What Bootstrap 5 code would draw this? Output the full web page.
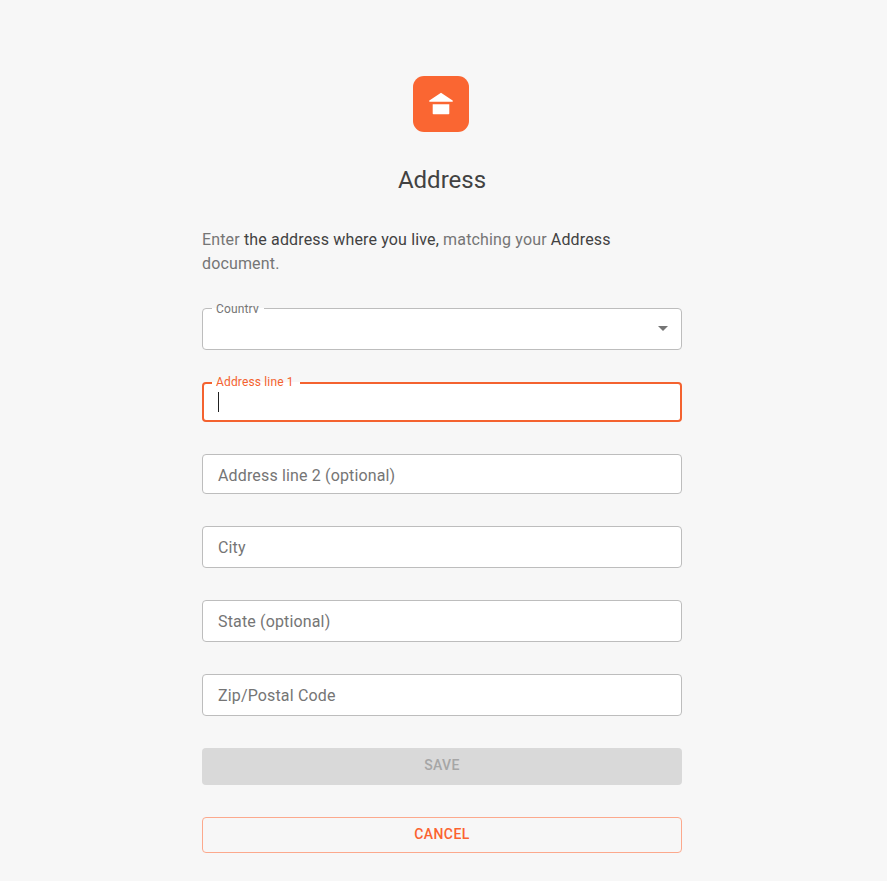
<!doctype html>
<html lang="en">
<head>
<meta charset="utf-8">
<title>Address</title>
<link href="https://cdn.jsdelivr.net/npm/bootstrap@5.3.0/dist/css/bootstrap.min.css" rel="stylesheet">
<style>
html,body{height:881px;overflow:hidden}
body{background:#f7f7f7;font-family:Roboto,"Liberation Sans",sans-serif;color:#424242}
.page-wrap{width:480px;margin-left:202px;padding-top:76px}
.logo-box{width:56px;height:56px;background:#fa6632;border-radius:11px;margin-left:211px}
.logo-box svg{display:block}
.page-title{font-size:24px;font-weight:400;line-height:32px;margin:32px 0 0;color:#424242;text-align:center}
.intro{font-size:16px;line-height:24px;letter-spacing:.15px;margin:32px 0 0;color:#757575}
.intro b{font-weight:400;color:#424242}
.form-stack{margin-top:32px;gap:32px}
.field-box{position:relative;background:#fff;border:1px solid #bdbdbd;border-radius:4px;height:42px;display:flex;align-items:center;padding:2px 15px 0;font-size:16px;letter-spacing:.15px;color:#757575}
.field-slim{height:40px;padding-top:4px}
.field-focus{border:2px solid #f4622f;padding:0 14px}
.float-label{position:absolute;top:-7px;left:9px;padding:0 5px 0 4px;height:11px;line-height:14px;overflow:hidden;font-size:12px;letter-spacing:.15px;color:#757575;background:linear-gradient(#f7f7f7 0 6px,#fff 6px)}
.field-focus .float-label{top:-8px;left:8px;height:14px;line-height:13px;padding:0 6px 0 4px;color:#f4622f}
.caret-bar{width:1px;height:20px;background:#212121}
.drop-arrow{position:absolute;right:13px;top:17px;width:0;height:0;border-left:5px solid transparent;border-right:5px solid transparent;border-top:5px solid #757575}
.act-btn{width:100%;font-size:14px;font-weight:500;letter-spacing:.4px;border-radius:4px;line-height:20px}
.act-save,.act-save:disabled{height:37px;padding:0 0 3px;background:#d9d9d9;border:0;color:#a6a6a6;opacity:1}
.act-cancel,.act-cancel:hover{height:36px;padding:0 0 2px;background:transparent;border:1px solid #fca98d;color:#fb6330}
</style>
</head>
<body>
<main class="page-wrap">
  <div class="logo-box d-flex align-items-center justify-content-center">
    <svg width="26" height="26" viewBox="0 0 26 26" aria-hidden="true"><path fill="#fff" d="M13 1.700 1.400 9.600c-.5.4-.3 1.100.3 1.100h22.600c.6 0 .8-.7.3-1.100z"/><path fill="#fff" d="M4.700 13.300h16.600v9c0 .6-.4 1-1 1H5.700c-.6 0-1-.4-1-1z"/></svg>
  </div>
  <h1 class="page-title">Address</h1>
  <p class="intro">Enter <b>the address where you live,</b> matching your <b>Address</b> document.</p>
  <form class="form-stack d-flex flex-column">
    <div class="field-box"><span class="float-label">Country</span><span class="drop-arrow"></span></div>
    <div class="field-box field-slim field-focus"><span class="float-label">Address line 1</span><span class="caret-bar"></span></div>
    <div class="field-box field-slim">Address line 2 (optional)</div>
    <div class="field-box">City</div>
    <div class="field-box">State (optional)</div>
    <div class="field-box">Zip/Postal Code</div>
    <button type="button" class="btn act-btn act-save" disabled>SAVE</button>
    <button type="button" class="btn act-btn act-cancel">CANCEL</button>
  </form>
</main>
<script src="https://cdn.jsdelivr.net/npm/bootstrap@5.3.0/dist/js/bootstrap.bundle.min.js"></script>
</body>
</html>
